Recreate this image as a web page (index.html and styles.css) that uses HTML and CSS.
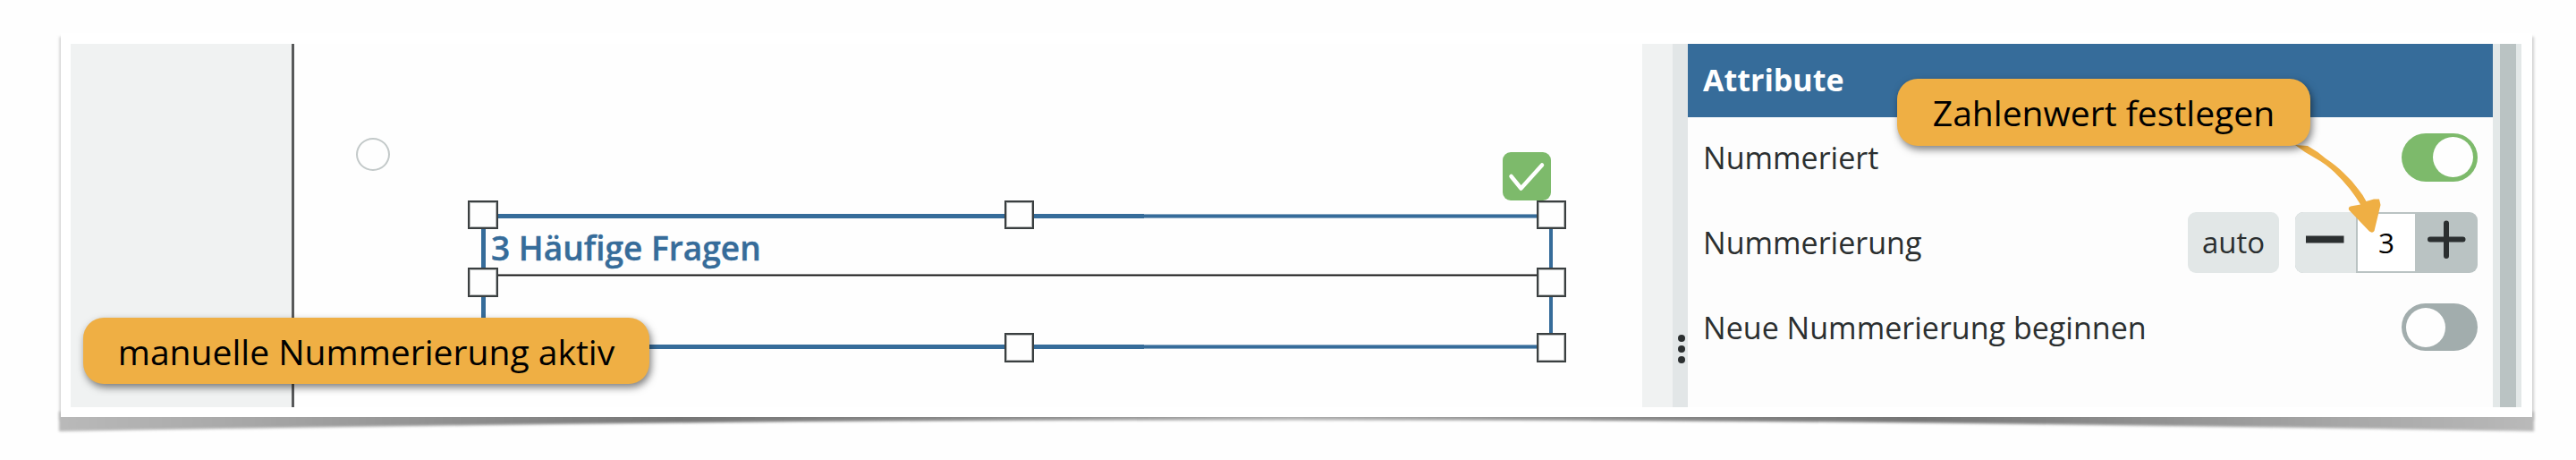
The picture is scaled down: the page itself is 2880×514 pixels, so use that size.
FILE: index.html
```html
<!DOCTYPE html>
<html lang="de">
<head>
<meta charset="utf-8">
<title>Attribute</title>
<link rel="stylesheet" href="styles.css">
</head>
<body>
<div class="stage">
  <svg class="sheet-shadow" viewBox="0 0 2880 514" aria-hidden="true">
    <defs>
      <linearGradient id="lift" gradientUnits="userSpaceOnUse" x1="66" y1="0" x2="2833" y2="0">
        <stop offset="0" stop-color="#b9b9b9"/>
        <stop offset=".08" stop-color="#a6a6a6"/>
        <stop offset=".25" stop-color="#757575"/>
        <stop offset=".4" stop-color="#8e8e8e"/>
        <stop offset=".5" stop-color="#a8a8a8"/>
        <stop offset=".6" stop-color="#8e8e8e"/>
        <stop offset=".75" stop-color="#757575"/>
        <stop offset=".92" stop-color="#a6a6a6"/>
        <stop offset="1" stop-color="#b9b9b9"/>
      </linearGradient>
      <filter id="soft" x="-1%" y="-10%" width="102%" height="120%"><feGaussianBlur stdDeviation="1.4"/></filter>
    </defs>
    <path class="shadow-side" d="M66.5 41H2833V470H66.5Z" filter="url(#soft)"/>
    <path d="M66 460H2833V482Q2100 469.5 1449 468Q800 469.5 66 482Z" fill="url(#lift)" filter="url(#soft)"/>
  </svg>

  <main class="sheet">
    <div class="margin"></div>
    <section class="canvas">
      <span class="anchor"></span>
      <div class="badge">
        <svg viewBox="0 0 54 54"><path d="M9.500 27L20.500 40.500L44 14.500"/></svg>
      </div>
      <div class="block">
        <h1 class="heading">3 Häufige Fragen</h1>
      </div>
      <i class="edge edge-top"></i>
      <i class="edge edge-bottom"></i>
      <i class="handle nw"></i><i class="handle n"></i><i class="handle ne"></i>
      <i class="handle w"></i><i class="handle e"></i>
      <i class="handle s"></i><i class="handle se"></i>
    </section>
    <div class="gutter"></div>
    <div class="splitter"><i></i><i></i><i></i></div>
    <aside class="panel">
      <h2 class="panel-title">Attribute</h2>
      <div class="row row-first">
        <span class="label">Nummeriert</span>
        <span class="toggle on"><i></i></span>
      </div>
      <div class="row row-number">
        <span class="label">Nummerierung</span>
        <div class="controls">
          <button class="auto">auto</button>
          <div class="stepper">
            <span class="minus"><svg viewBox="0 0 68 68"><path d="M12 30.500H54.500"/></svg></span>
            <span class="value">3</span>
            <span class="plus"><svg viewBox="0 0 70 68"><path d="M17 30.500H53.500M35 12.500V49"/></svg></span>
          </div>
        </div>
      </div>
      <div class="row row-restart">
        <span class="label">Neue Nummerierung beginnen</span>
        <span class="toggle off"><i></i></span>
      </div>
    </aside>
    <div class="scrollbar"><i></i></div>
  </main>

  <svg class="arrow" viewBox="2560 155 110 110" aria-hidden="true">
    <path d="M2566 162L2580 163Q2591 169 2600 177Q2612 185 2620 193Q2630 202 2637 212Q2642 218 2645.500 225L2654 222.500L2660 222.500L2661.500 229L2654.500 258Q2652.500 261 2649 258.500L2626.500 235Q2624.500 232 2628 230.500L2639 228.500Q2634 220 2627 211Q2619 201 2610 192.500Q2600 183 2589 177Q2576 170 2566 162Z"/>
  </svg>
  <div class="callout callout-active"><span>manuelle Nummerierung aktiv</span></div>
  <div class="callout callout-value"><span>Zahlenwert festlegen</span></div>
</div>
</body>
</html>
```

FILE: styles.css
```css
* { box-sizing: border-box; }
body {
  margin: 0;
  background: #fefefe;
  font-family: "Open Sans", "Noto Sans", sans-serif;
  color: #2b2f30;
}
.stage {
  position: relative;
  width: 2880px;
  height: 514px;
  padding: 37px 49px 48px 68px;
  overflow: hidden;
}
.sheet-shadow { position: absolute; left: 0; top: 0; width: 2880px; height: 514px; }
.shadow-side { fill: #cfcfcf; }

.sheet {
  position: relative;
  display: flex;
  width: 2763px;
  height: 429px;
  padding: 12px 12px 11px 11px;
  background: #fff;
}
.margin { width: 250px; background: #f0f2f2; border-right: 3px solid #58595a; }
.canvas { position: relative; width: 1507px; background: #fefefe; }
.gutter { width: 34px; background: #f0f2f2; }
.splitter {
  display: flex;
  flex-direction: column;
  align-items: center;
  gap: 4px;
  width: 17px;
  padding: 325px 0 0 2px;
  background: #e2e6e7;
}
.splitter i { width: 8px; height: 8px; border-radius: 50%; background: #2b2f30; }

/* canvas objects */
.anchor {
  position: absolute; left: 69px; top: 105px;
  width: 38px; height: 37px;
  border: 2px solid #c3c9c9; border-radius: 50%;
}
.badge {
  position: absolute; left: 1351px; top: 121px;
  width: 54px; height: 54px; border-radius: 9px;
  background: #7dba6b;
}
.badge svg { display: block; fill: none; stroke: #fff; stroke-width: 4.5; stroke-linecap: round; stroke-linejoin: round; }
.block {
  position: absolute; left: 209px; top: 190px;
  width: 1198px; height: 151px;
  border: 5px solid #366c9a;
  border-right-width: 4px;
}
.heading {
  margin: 0;
  height: 65px;
  padding-left: 6px;
  background: linear-gradient(#8e8e8e 0 1px, #101010 1px 2px, #8e8e8e 2px 3px) bottom / 100% 3px no-repeat;
  font-size: 37.1px; line-height: 66px; font-weight: 600;
  -webkit-text-stroke: .4px #366c9a;
  color: #366c9a; white-space: nowrap;
}
.edge {
  position: absolute; left: 950px; width: 453px; height: 5px;
  border: solid #8aa9c4; border-width: 1px 0; background: #366c9a;
}
.edge-top { top: 190px; }
.edge-bottom { top: 336px; }
.handle {
  position: absolute; width: 33px; height: 33px;
  border: 2px solid #3a3f40; background: #fefefe;
  box-shadow: inset 0 0 0 1px rgba(58, 63, 64, .35);
}
.nw, .w { left: 194px; width: 34px; }
.n, .s { left: 794px; }
.ne, .e, .se { left: 1389px; }
.nw, .n, .ne { top: 175px; height: 32px; }
.w, .e { top: 250px; }
.s, .se { top: 323px; }

/* attribute panel */
.panel { width: 900px; background: #fdfdfd; }
.panel-title {
  height: 82px; margin: 0; padding: 0 17px;
  background: #366c9a; color: #fff;
  font-size: 34px; line-height: 80px; font-weight: 700;
}
.row {
  display: flex; align-items: center; justify-content: space-between;
  padding: 0 17px 0 17px;
}
.row-first { height: 89px; }
.row-number { height: 102px; }
.row-restart { height: 87px; }
.label { font-size: 34.05px; line-height: 46px; white-space: nowrap; }
.toggle { display: flex; align-items: center; width: 85px; height: 54px; padding: 0 5px; border-radius: 27px; }
.toggle i { width: 45px; height: 45px; border-radius: 50%; background: #fefefe; }
.on { justify-content: flex-end; background: #7dba6b; }
.off { height: 53px; background: #a2adad; }
.off i { width: 44px; height: 44px; }
.controls { display: flex; gap: 18px; }
.auto {
  width: 102px; height: 68px; padding: 0; border: 0; border-radius: 9px;
  background: #e2e7e7; color: #2b2f30;
  font: 33px/68px "Open Sans", sans-serif;
}
.stepper { display: flex; width: 204px; height: 68px; border-radius: 9px; overflow: hidden; background: #bac3c3; }
.stepper svg { display: block; fill: none; stroke: #2b2f30; stroke-width: 6; stroke-linecap: round; }
.minus { width: 68px; background: #e2e7e7; }
.minus svg { stroke-width: 8; stroke-linecap: butt; }
.value {
  width: 64px; height: 64px; margin: 2px 0 0 2px;
  background: #fff; color: #000;
  font-size: 31.5px; line-height: 64px; text-align: center;
}
.plus { width: 70px; }
.scrollbar { width: 32px; padding: 0 6px 0 8px; background: #e3e8e8; }
.scrollbar i { display: block; height: 100%; background: #bac3c3; }

/* annotations */
.arrow { position: absolute; left: 2560px; top: 155px; width: 110px; height: 110px; fill: #efaf44; }
.callout {
  position: absolute; height: 75px; border-radius: 23px;
  background: #efaf44; color: #000;
  box-shadow: 2px 4px 8px rgba(0, 0, 0, .5);
  font-size: 39.05px; line-height: 75px; text-align: center; white-space: nowrap;
}
.callout-active { left: 93px; top: 355px; width: 633px; height: 74px; }
.callout-value { left: 2121px; top: 88px; width: 462px; }
```
